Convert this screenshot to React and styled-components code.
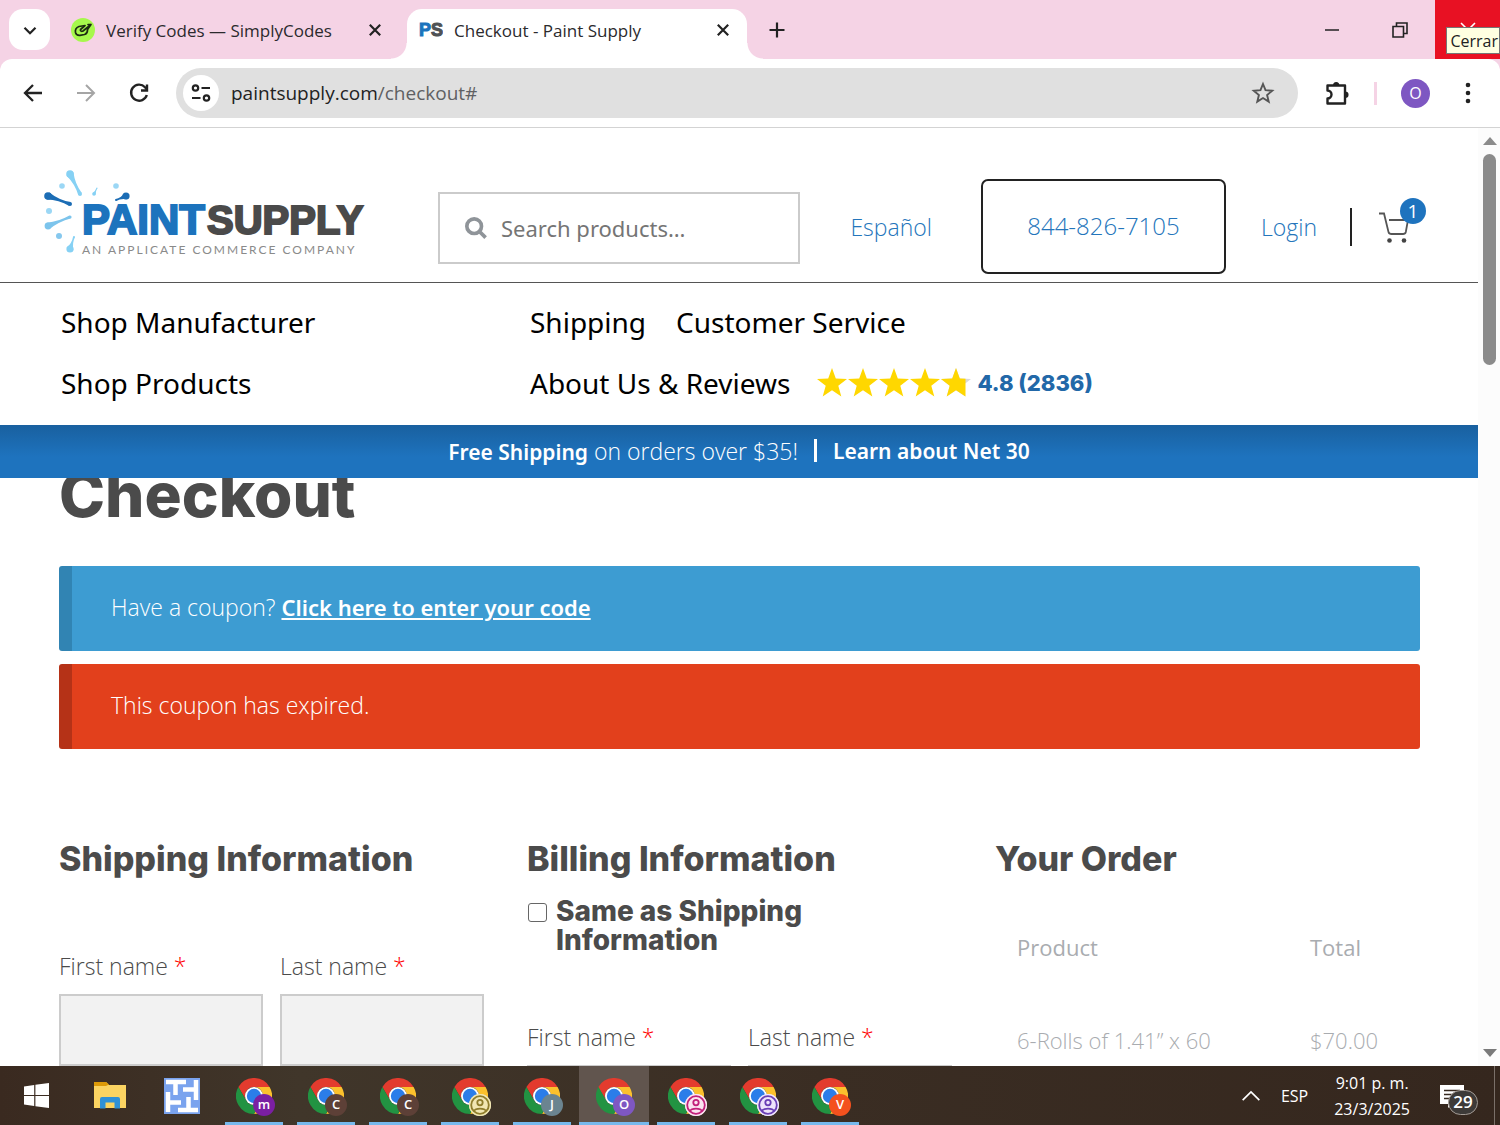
import React from "react";
import styled, { createGlobalStyle, css } from "styled-components";

const ui = '"Open Sans", "Noto Sans", sans-serif';
const body = '"Noto Sans", "Open Sans", sans-serif';
const light = '"Open Sans", "Noto Sans", sans-serif';
const display = 'Inter, "Liberation Sans", sans-serif';

const GlobalStyle = createGlobalStyle`
  *, *::before, *::after { box-sizing: border-box; }
  body { margin: 0; background: #fff; font-family: ${body}; }
  button, input { font: inherit; color: inherit; }
  button { border: 0; padding: 0; background: none; cursor: pointer; }
  a { color: inherit; text-decoration: none; }
  h1, h2, p { margin: 0; padding: 0; }
  svg { display: block; flex: none; }
`;

const Screen = styled.div`
  height: 100vh;
  display: flex;
  flex-direction: column;
  overflow: hidden;
`;

/* ---------- browser chrome ---------- */

const TabStrip = styled.div`
  flex: none;
  height: 59px;
  display: flex;
  align-items: flex-end;
  background: #f5d3e5;
  font-family: ${ui};
`;

const TabMenu = styled.button`
  width: 41px;
  height: 41px;
  margin: 0 9px 9px;
  border-radius: 14px;
  background: #fff;
  display: grid;
  place-items: center;
`;

const Tab = styled.div`
  position: relative;
  height: 50px;
  width: ${(p) => (p.$active ? 340 : 348)}px;
  padding: 0 ${(p) => (p.$active ? 12 : 20)}px 8px 12px;
  display: flex;
  align-items: center;
  gap: 11px;
  color: #2b2a2d;
  font-size: 17px;
  border-radius: 15px 15px 0 0;
  ${(p) =>
    p.$active &&
    css`
      background: #fff;
      &::before,
      &::after {
        content: "";
        position: absolute;
        bottom: 0;
        width: 16px;
        height: 16px;
      }
      &::before {
        right: 100%;
        background: radial-gradient(circle at 0 0, transparent 15px, #fff 16px);
      }
      &::after {
        left: 100%;
        background: radial-gradient(circle at 100% 0, transparent 15px, #fff 16px);
      }
    `}
`;

const TabTitle = styled.span`
  flex: 1;
  white-space: nowrap;
`;

const IconButton = styled.button`
  width: ${(p) => p.$w || 24}px;
  height: ${(p) => p.$h || 24}px;
  display: grid;
  place-items: center;
  flex: none;
`;

const NewTab = styled(IconButton)`
  margin: 0 18px 17px;
`;

const WindowButtons = styled.div`
  align-self: stretch;
  margin-left: auto;
  display: flex;
`;

const CloseWindow = styled(IconButton)`
  position: relative;
  background: #e81123;
`;

const Tooltip = styled.span`
  position: absolute;
  right: 0;
  top: 27px;
  height: 27px;
  padding: 0 1px 0 3px;
  border: 1px solid #767676;
  background: #ffffe1;
  color: #222;
  font-size: 16px;
  line-height: 26px;
`;

const ToolbarBackdrop = styled.div`
  flex: none;
  background: #f5d3e5;
`;

const Toolbar = styled.div`
  height: 69px;
  padding: 0 28px 0 21px;
  display: flex;
  align-items: center;
  border-bottom: 1px solid #d3d3d3;
  border-radius: 12px 12px 0 0;
  background: #fff;
  font-family: ${ui};
`;

const NavButtons = styled.div`
  display: flex;
  gap: 29px;
  margin-right: 25px;
`;

const AddressBar = styled.div`
  flex: 1;
  height: 50px;
  padding: 0 23px 0 7px;
  border-radius: 25px;
  background: #e0e0e0;
  display: flex;
  align-items: center;
  gap: 12px;
`;

const SiteInfo = styled.button`
  width: 36px;
  height: 36px;
  border-radius: 50%;
  background: #fff;
  display: grid;
  place-items: center;
`;

const Url = styled.span`
  flex: 1;
  font-size: 19px;
  color: #5f6063;
  b { font-weight: 400; color: #222; }
`;

const ToolbarEnd = styled.div`
  display: flex;
  align-items: center;
  margin-left: 27px;
`;

const ToolbarRule = styled.span`
  width: 3px;
  height: 23px;
  margin: 0 24px 0 25px;
  background: #f5d3e5;
`;

const Profile = styled.button`
  width: 29px;
  height: 29px;
  margin-right: 34px;
  border-radius: 50%;
  background: #7e57c2;
  color: #fff;
  font-size: 16px;
  line-height: 28px;
`;

/* ---------- page ---------- */

const Viewport = styled.div`
  flex: 1;
  min-height: 0;
  display: flex;
`;

const Page = styled.div`
  flex: 1;
  min-width: 0;
  overflow: hidden;
  color: #4b4b4b;
`;

const Scrollbar = styled.div`
  flex: none;
  width: 22px;
  padding: 9px 4px 9px 5px;
  background: #fcfcfc;
  display: flex;
  flex-direction: column;
  align-items: center;
  gap: 9px;
`;

const Thumb = styled.div`
  width: 13px;
  height: 211px;
  margin-bottom: auto;
  border-radius: 7px;
  background: #8b8b8b;
`;

const Header = styled.header`
  background: #fff;
`;

const HeaderTop = styled.div`
  padding: 42px 52px 8px 44px;
  display: flex;
  align-items: flex-end;
  border-bottom: 1px solid #555;
`;

const HeaderTools = styled.div`
  flex: 1;
  min-width: 0;
  height: 95px;
  margin-left: 72px;
  display: flex;
  align-items: center;
  color: #2475bb;
  font-family: ${light};
  font-weight: 300;
  font-size: 23px;
`;

const Search = styled.label`
  flex: 1;
  min-width: 0;
  height: 72px;
  margin: 3px 50px 0 0;
  padding: 0 25px;
  border: 2px solid #cbcbcb;
  display: flex;
  align-items: center;
  gap: 14px;
  color: #757575;
`;

const SearchInput = styled.input`
  flex: 1;
  min-width: 0;
  border: 0;
  outline: 0;
  padding: 0;
  background: none;
  font-family: ${body};
  font-size: 22px;
  font-weight: 400;
  &::placeholder { color: #757575; opacity: 1; }
`;

const Phone = styled.a`
  flex: none;
  width: 245px;
  height: 95px;
  margin: 0 35px 0 49px;
  padding-bottom: 2px;
  border: 2px solid #222;
  border-radius: 7px;
  display: grid;
  place-items: center;
  font-size: 24px;
`;

const HeaderRule = styled.span`
  width: 2px;
  height: 38px;
  margin: 0 26px 0 33px;
  background: #222;
`;

const Cart = styled.a`
  position: relative;
  flex: none;
  width: 48px;
  height: 36px;
`;

const CartCount = styled.span`
  position: absolute;
  right: 0;
  top: -11px;
  width: 26px;
  height: 26px;
  border-radius: 50%;
  background: #1e73be;
  color: #fff;
  font-size: 19px;
  font-weight: 400;
  line-height: 26px;
  text-align: center;
`;

const SiteNav = styled.nav`
  height: 142px;
  padding: 8px 59px 12px 61px;
  display: grid;
  grid-template-columns: 469px 1fr;
  grid-auto-rows: 61px;
  align-items: center;
  color: #000;
  font-size: 28px;
`;

const NavCell = styled.div`
  display: flex;
  align-items: center;
  gap: ${(p) => p.$gap || 30}px;
  white-space: nowrap;
`;

const Rating = styled.a`
  display: flex;
  align-items: center;
  gap: 6px;
  color: #2268a8;
  font-family: ${display};
  font-weight: 800;
  font-size: 22px;
`;

const Banner = styled.div`
  height: 53px;
  padding-bottom: 2px;
  display: flex;
  align-items: center;
  justify-content: center;
  gap: 16px;
  background: linear-gradient(#19609f, #1e73be 60%);
  color: #fff;
  font-family: ${light};
  font-size: 23px;
  font-weight: 300;
  white-space: nowrap;
  b, a { font-family: ${body}; font-weight: 600; font-size: 21px; }
`;

const BannerRule = styled.span`
  width: 3px;
  height: 23px;
  background: #fff;
`;

const Content = styled.main`
  padding: 0 58px 0 59px;
  overflow: hidden;
`;

const Title = styled.h1`
  margin: -18px 0 36px;
  font-family: ${display};
  font-weight: 800;
  font-size: 62px;
  line-height: 70px;
`;

const Notice = styled.p`
  height: 85px;
  margin-bottom: 13px;
  padding-left: 39px;
  border-left: 13px solid ${(p) => (p.$error ? "#b53217" : "#3184b3")};
  border-radius: 3px;
  background: ${(p) => (p.$error ? "#e2401c" : "#3d9cd2")};
  color: #fff;
  font-family: ${light};
  font-weight: 300;
  font-size: 23px;
  line-height: 82px;
  a {
    font-family: ${body};
    font-weight: 600;
    font-size: 22px;
    text-decoration: underline;
  }
`;

const Columns = styled.div`
  padding-top: 77px;
  display: grid;
  grid-template-columns: repeat(3, minmax(0, 1fr));
  gap: 43px;
`;

const SectionTitle = styled.h2`
  font-family: ${display};
  font-weight: 800;
  font-size: 34px;
  line-height: 40px;
  white-space: nowrap;
`;

const SameAs = styled.label`
  margin: 18px 0 66px;
  display: flex;
  gap: 9px;
  font-family: ${display};
  font-weight: 800;
  font-size: 28px;
  line-height: 29px;
`;

const Checkbox = styled.input`
  appearance: none;
  flex: none;
  width: 19px;
  height: 19px;
  margin: 6px 0 0 1px;
  border: 1px solid #666;
  border-radius: 3px;
  background: #fff;
`;

const SameAsText = styled.span`
  max-width: 280px;
`;

const Fields = styled.div`
  margin-top: ${(p) => p.$top || 0}px;
  display: grid;
  grid-template-columns: 1fr 1fr;
  gap: 17px;
`;

const Field = styled.label`
  min-width: 0;
  display: flex;
  flex-direction: column;
  gap: 12px;
  font-family: ${light};
  font-weight: 300;
  font-size: 23px;
  line-height: 32px;
`;

const Required = styled.abbr`
  color: #f00;
`;

const TextBox = styled.input`
  width: 100%;
  height: 72px;
  padding: 0 16px;
  border: 2px solid #ccc;
  border-radius: 0;
  background: #f2f2f2;
`;

const OrderTable = styled.table`
  width: 100%;
  margin-top: 51px;
  border-collapse: collapse;
  table-layout: fixed;
  text-align: left;
  color: #a9acb0;
  font-family: ${light};
  font-size: 22px;
  line-height: 34px;
  th, td {
    padding: 0 0 59px 22px;
    font-weight: 300;
    white-space: nowrap;
  }
  th { font-weight: 400; }
  th:last-child { width: 132px; }
`;

/* ---------- taskbar ---------- */

const Taskbar = styled.footer`
  flex: none;
  height: 59px;
  display: flex;
  gap: 2px;
  background: linear-gradient(90deg, #3a2a20, #40362a 20%, #3a2d23 55%, #35271e);
  color: #fff;
  font-family: ${ui};
  font-size: 16px;
`;

const TaskButton = styled.button`
  width: ${(p) => p.$w || 70}px;
  display: flex;
  flex-direction: column;
  align-items: center;
  justify-content: center;
  background-color: ${(p) => (p.$active ? "#61554e" : "transparent")};
  background-repeat: no-repeat;
  background-position: bottom;
  background-size: ${(p) => (p.$active ? "100%" : "58px")} 3px;
  ${(p) => p.$open && "background-image: linear-gradient(#76b9ed, #76b9ed);"}
`;

const ChromeWrap = styled.span`
  position: relative;
  display: block;
`;

const Badge = styled.span`
  position: absolute;
  left: 17px;
  top: 16px;
  width: 22px;
  height: 22px;
  border-radius: 50%;
  background: ${(p) => p.$color};
  color: #fff;
  font-size: 13px;
  font-weight: 600;
  line-height: 21px;
  text-align: center;
`;

const Tray = styled.div`
  margin-left: auto;
  padding-right: 5px;
  display: flex;
  align-items: center;
`;

const Language = styled.span`
  margin: 0 26px 0 20px;
`;

const Clock = styled.time`
  margin-right: 30px;
  text-align: center;
  line-height: 26px;
`;

const Notifications = styled.button`
  position: relative;
  width: 38px;
  height: 36px;
  margin: 3px 16px 0 0;
`;

const NotificationCount = styled.span`
  position: absolute;
  right: 0;
  bottom: 0;
  width: 30px;
  height: 25px;
  border: 1px solid #a39b95;
  border-radius: 13px;
  background: #3d3a38;
  font-size: 17px;
  font-weight: 600;
  line-height: 22px;
`;

const TrayEdge = styled.span`
  width: 1px;
  height: 100%;
  background: #7a7069;
`;

/* ---------- drawings ---------- */

const Stroke = ({ size = 24, color = "#222", w = 2, children, ...rest }) => (
  <svg width={size} height={size} viewBox="0 0 24 24" fill="none" stroke={color} strokeWidth={w} {...rest}>
    {children}
  </svg>
);

const Cross = () => (
  <Stroke w={2.2}>
    <path d="M6.8 6.8 17.2 17.2M17.2 6.8 6.8 17.2" />
  </Stroke>
);

const ChromeIcon = () => (
  <svg width="36" height="36" viewBox="0 0 48 48">
    <path fill="#e33b2e" d="M24 12H44.8A24 24 0 0 0 3.2 12L13.6 30A12 12 0 0 1 24 12Z" />
    <path fill="#fcc12d" d="M34.4 30 24 48A24 24 0 0 0 44.8 12H24A12 12 0 0 1 34.4 30Z" />
    <path fill="#229342" d="M13.6 30 3.2 12A24 24 0 0 0 24 48L34.4 30A12 12 0 0 1 13.6 30Z" />
    <circle cx="24" cy="24" r="12" fill="#fff" />
    <circle cx="24" cy="24" r="9.6" fill="#2b7de9" />
  </svg>
);

const PersonBadge = ({ color, fill }) => (
  <svg width="22" height="22" viewBox="0 0 22 22" fill="none" stroke={color} strokeWidth="1.8">
    <circle cx="11" cy="11" r="11" fill={fill} stroke="none" />
    <circle cx="11" cy="11" r="8.8" />
    <circle cx="11" cy="8.6" r="2.7" />
    <path d="M5 17c1.500-3.200 10.500-3.200 12 0" />
  </svg>
);

const starPath = "M15 0 18.800 10.400 30 11 21.300 17.800 24.300 28.500 15 22.300 5.700 28.500 8.700 17.800 0 11 11.200 10.400Z";

const Stars = () => (
  <svg width="154" height="29" viewBox="0 0 154 29">
    {[0, 31, 62, 93].map((x) => (
      <path key={x} d={starPath} transform={`translate(${x} 0)`} fill="#ffd700" />
    ))}
    <g transform="translate(124 0)">
      <path d={starPath} fill="#d9d9d9" />
      <path d="M15 0 18.800 10.400 24.500 10.700V28.500L15 22.300 5.700 28.500 8.700 17.800 0 11 11.200 10.400Z" fill="#ffd700" />
    </g>
  </svg>
);

const drop = (x1, y1, r1, x2, y2, r2, color) => {
  const a = Math.atan2(y2 - y1, x2 - x1) + Math.PI / 2;
  const c = Math.cos(a);
  const s = Math.sin(a);
  const mx = (x1 + x2) / 2;
  const my = (y1 + y2) / 2;
  return (
    <g fill={color}>
      <circle cx={x1} cy={y1} r={r1} />
      <circle cx={x2} cy={y2} r={r2} />
      <path
        d={`M${x1 + c * r1} ${y1 + s * r1}Q${mx} ${my} ${x2 + c * r2} ${y2 + s * r2}L${x2 - c * r2} ${y2 - s * r2}Q${mx} ${my} ${x1 - c * r1} ${y1 - s * r1}Z`}
      />
    </g>
  );
};

const Logo = () => (
  <svg width="322" height="104" viewBox="0 0 322 104" role="img" aria-label="Paint Supply">
    {drop(26, 4, 3.8, 36, 24, 2, "#86d1f4")}
    {drop(4, 26, 3.8, 26, 34, 2, "#1c6db5")}
    {drop(4, 56, 3.4, 26, 47, 1.6, "#7cc4ec")}
    {drop(26, 79, 3.6, 30, 67, 1, "#86d1f4")}
    {drop(82, 26, 3.6, 72, 30, 1, "#1c6db5")}
    {drop(50, 24, 1.8, 53, 18, 0.5, "#86d1f4")}
    <circle cx="18" cy="16" r="2.800" fill="#9bd7f5" />
    <circle cx="72" cy="16" r="2.800" fill="#9bd7f5" />
    <circle cx="5" cy="41" r="3" fill="#9bd7f5" />
    <circle cx="15" cy="66" r="3" fill="#86c8ee" />
    <g fontFamily="Liberation Sans, Arial, sans-serif" fontWeight="700" fontSize="40" strokeWidth="2">
      <text x="38" y="64" fontSize="42" fill="#1c73bd" stroke="#1c73bd">PAINT</text>
      <text x="163" y="64" fill="#4a4a4a" stroke="#4a4a4a">SUPPLY</text>
    </g>
    <text x="38" y="84" fontFamily="Lato, sans-serif" fontSize="12" fill="#8a8a8a" letterSpacing="2">
      AN APPLICATE COMMERCE COMPANY
    </text>
  </svg>
);

const PsIcon = () => (
  <svg width="24" height="24" viewBox="0 0 24 24">
    <text x="0" y="18" fontFamily="Liberation Sans, Arial, sans-serif" fontWeight="700" fontSize="18" strokeWidth="1">
      <tspan fill="#1c73bd" stroke="#1c73bd">P</tspan>
      <tspan fill="#4f5255" stroke="#4f5255">S</tspan>
    </text>
  </svg>
);

const MazeIcon = () => (
  <svg width="36" height="36" viewBox="0 0 36 36">
    <path d="M0 0H36V36H0Z" fill="#7aa3ee" />
    {[0, 90, 180, 270].map((turn) => (
      <path
        key={turn}
        d="M2 4H22M11.500 4V17"
        transform={`rotate(${turn} 18 18)`}
        stroke="#fff"
        strokeWidth="4.500"
        fill="none"
      />
    ))}
  </svg>
);

const profiles = [
  { letter: "m", color: "#7b1fa2" },
  { letter: "C", color: "#5d4037" },
  { letter: "C", color: "#5d4037" },
  { person: "#8f7d2c", color: "#f1e6b2" },
  { letter: "J", color: "#6b8490" },
  { letter: "O", color: "#7e57c2", active: true },
  { person: "#c2207a", color: "#fbe3f0" },
  { person: "#6a3fb5", color: "#eee3fb" },
  { letter: "V", color: "#f4511e" },
];

const NameFields = ({ section, top }) => (
  <Fields $top={top}>
    {["First name", "Last name"].map((label) => (
      <Field key={label}>
        <span>
          {label} <Required>*</Required>
        </span>
        <TextBox type="text" name={`${section}-${label}`} />
      </Field>
    ))}
  </Fields>
);

export default function App() {
  return (
    <Screen>
      <GlobalStyle />
      <TabStrip>
        <TabMenu aria-label="Tabs">
          <Stroke size={22} w={2.4}>
            <path d="m6 9.500 6 6 6-6" />
          </Stroke>
        </TabMenu>
        <Tab>
          <svg width="24" height="24" viewBox="0 0 24 24">
            <circle cx="12" cy="12" r="12" fill="#a6f84c" />
            <g fill="none" stroke="#1c2a12" strokeWidth="1.700" strokeLinecap="round" strokeLinejoin="round">
              <path d="M14 7.500 8 8.500C5.500 9.500 4 12 4.500 14.500c.5 2 2 3 4.500 2.800l4.500-.8c2-.5 3-2.500 3-4.500" />
              <path d="M13.500 8 9.500 11.500c-.5 1.500 1 2.300 2.500 1.500L20 6.500l-3.500 5M17 6.500h2.500" />
            </g>
          </svg>
          <TabTitle>Verify Codes — SimplyCodes</TabTitle>
          <IconButton aria-label="Close tab"><Cross /></IconButton>
        </Tab>
        <Tab $active>
          <PsIcon />
          <TabTitle>Checkout - Paint Supply</TabTitle>
          <IconButton aria-label="Close tab"><Cross /></IconButton>
        </Tab>
        <NewTab aria-label="New tab">
          <Stroke w={2.2}>
            <path d="M12 4.500v15M4.500 12h15" />
          </Stroke>
        </NewTab>
        <WindowButtons>
          <IconButton $w={66} $h={59} aria-label="Minimize">
            <Stroke w={1.5}><path d="M5 12h14" /></Stroke>
          </IconButton>
          <IconButton $w={70} $h={59} aria-label="Restore">
            <Stroke w={1.6}><path d="M5 8.500h10.500V19H5ZM8.500 8.500V5H19v10.500h-3.500" /></Stroke>
          </IconButton>
          <CloseWindow $w={65} $h={59} aria-label="Close window">
            <Stroke w={1.6} color="#fff"><path d="m5 5 14 14M19 5 5 19" /></Stroke>
            <Tooltip>Cerrar</Tooltip>
          </CloseWindow>
        </WindowButtons>
      </TabStrip>

      <ToolbarBackdrop>
        <Toolbar>
          <NavButtons>
            <IconButton aria-label="Back">
              <Stroke w={2.3}><path d="M21 12H4.500M12 4 4 12l8 8" /></Stroke>
            </IconButton>
            <IconButton aria-label="Forward">
              <Stroke w={2} color="#a5a5a5"><path d="M3 12h16.500M12 4l8 8-8 8" /></Stroke>
            </IconButton>
            <IconButton aria-label="Reload">
              <Stroke w={2.4}>
                <path d="M19.800 14A8 8 0 1 1 18 6.200L20 8.500" />
                <path d="M20 3.500v6h-6" />
              </Stroke>
            </IconButton>
          </NavButtons>
          <AddressBar>
            <SiteInfo aria-label="Site information">
              <Stroke w={2.2}>
                <circle cx="6.500" cy="7" r="2.700" />
                <path d="M12.500 7H21M3 17h8.500" />
                <circle cx="17.500" cy="17" r="2.700" />
              </Stroke>
            </SiteInfo>
            <Url><b>paintsupply.com</b>/checkout#</Url>
            <IconButton aria-label="Bookmark">
              <Stroke w={1.9} color="#555">
                <path d="m12 3 2.500 6.200 6.700.5-5.100 4.300 1.600 6.600L12 17l-5.700 3.600L7.900 14 2.800 9.700l6.700-.5Z" />
              </Stroke>
            </IconButton>
          </AddressBar>
          <ToolbarEnd>
            <IconButton aria-label="Extensions">
              <svg width="24" height="26" viewBox="0 0 24 26">
                <path
                  d="M2.500 4.500H20V22.500H2.500V17.500a4 4 0 0 0 0-8Z"
                  fill="none"
                  stroke="#222"
                  strokeWidth="2.400"
                  strokeLinejoin="round"
                />
                <path d="M8 4.500a3.200 3.500 0 0 1 6.400 0ZM20 10.500a3.500 3.200 0 0 1 0 6.500Z" fill="#222" />
              </svg>
            </IconButton>
            <ToolbarRule />
            <Profile aria-label="Profile">O</Profile>
            <IconButton $w={8} aria-label="Menu">
              <svg width="6" height="24" viewBox="0 0 6 24" fill="#222">
                <circle cx="3" cy="4" r="2.300" />
                <circle cx="3" cy="12" r="2.300" />
                <circle cx="3" cy="20" r="2.300" />
              </svg>
            </IconButton>
          </ToolbarEnd>
        </Toolbar>
      </ToolbarBackdrop>

      <Viewport>
        <Page>
          <Header>
            <HeaderTop>
              <a href="#home"><Logo /></a>
              <HeaderTools>
                <Search>
                  <Stroke size={22} w={4} color="#8f9499">
                    <circle cx="10" cy="10" r="8" />
                    <path d="m15.500 15.500 7 7" />
                  </Stroke>
                  <SearchInput type="search" aria-label="Search products" placeholder="Search products…" />
                </Search>
                <a href="#es">Español</a>
                <Phone href="tel:8448267105">844-826-7105</Phone>
                <a href="#login">Login</a>
                <HeaderRule />
                <Cart href="#cart" aria-label="Cart">
                  <svg width="32" height="36" viewBox="0 0 32 36" fill="none" stroke="#555" strokeWidth="1.800">
                    <path d="M1 4.500h5l4.500 18.500q.5 2 3 2h11.500q2.300 0 2.800-2L30 11H11" />
                    <circle cx="11.500" cy="31.500" r="2.300" fill="#444" stroke="none" />
                    <circle cx="26" cy="31.500" r="2.300" fill="#444" stroke="none" />
                  </svg>
                  <CartCount>1</CartCount>
                </Cart>
              </HeaderTools>
            </HeaderTop>
            <SiteNav>
              <NavCell><a href="#manufacturer">Shop Manufacturer</a></NavCell>
              <NavCell>
                <a href="#shipping">Shipping</a>
                <a href="#service">Customer Service</a>
              </NavCell>
              <NavCell><a href="#products">Shop Products</a></NavCell>
              <NavCell $gap={27}>
                <a href="#about">About Us &amp; Reviews</a>
                <Rating href="#reviews"><Stars />4.8 (2836)</Rating>
              </NavCell>
            </SiteNav>
          </Header>
          <Banner>
            <span><b>Free Shipping</b> on orders over $35!</span>
            <BannerRule />
            <a href="#net30">Learn about Net 30</a>
          </Banner>
          <Content>
            <Title>Checkout</Title>
            <Notice>Have a coupon? <a href="#coupon">Click here to enter your code</a></Notice>
            <Notice $error>This coupon has expired.</Notice>
            <Columns>
              <section>
                <SectionTitle>Shipping Information</SectionTitle>
                <NameFields section="shipping" top={71} />
              </section>
              <section>
                <SectionTitle>Billing Information</SectionTitle>
                <SameAs>
                  <Checkbox type="checkbox" />
                  <SameAsText>Same as Shipping Information</SameAsText>
                </SameAs>
                <NameFields section="billing" />
              </section>
              <section>
                <SectionTitle>Your Order</SectionTitle>
                <OrderTable>
                  <thead>
                    <tr><th>Product</th><th>Total</th></tr>
                  </thead>
                  <tbody>
                    <tr><td>6-Rolls of 1.41” x 60</td><td>$70.00</td></tr>
                  </tbody>
                </OrderTable>
              </section>
            </Columns>
          </Content>
        </Page>
        <Scrollbar>
          <svg width="14" height="8" viewBox="0 0 14 8"><path d="M7 0 14 8H0Z" fill="#8b8b8b" /></svg>
          <Thumb />
          <svg width="14" height="8" viewBox="0 0 14 8"><path d="M0 0H14L7 8Z" fill="#7a7a7a" /></svg>
        </Scrollbar>
      </Viewport>

      <Taskbar>
        <TaskButton $w={73} aria-label="Start">
          <svg width="25" height="25" viewBox="0 0 25 25" fill="#fff">
            <path d="M0 3.500 10.200 2V12H0ZM11.400 1.800 25 0V12H11.400ZM0 13H10.200V23L0 21.500ZM11.400 13H25V25L11.400 23.200Z" />
          </svg>
        </TaskButton>
        <TaskButton aria-label="File Explorer">
          <svg width="32" height="27" viewBox="0 0 32 27">
            <path d="M0 0H12l3 3H32V26H0Z" fill="#fbd462" />
            <path d="M0 0H12l3 2.500L12 4H0Z" fill="#dd9a08" />
            <path d="M6 26.500V17q0-2 2-2H24q2 0 2 2v9.500H20.500V20.500H11.500v6Z" fill="#3091d6" />
          </svg>
        </TaskButton>
        <TaskButton aria-label="Maze">
          <MazeIcon />
        </TaskButton>
        {profiles.map((p, i) => (
          <TaskButton key={i} $open $active={p.active} aria-label="Chrome">
            <ChromeWrap>
              <ChromeIcon />
              <Badge $color={p.color}>
                {p.person ? <PersonBadge color={p.person} fill={p.color} /> : p.letter}
              </Badge>
            </ChromeWrap>
          </TaskButton>
        ))}
        <Tray>
          <Stroke size={20} w={2} color="#fff"><path d="m2 17 10-10 10 10" /></Stroke>
          <Language>ESP</Language>
          <Clock>9:01 p. m.<br />23/3/2025</Clock>
          <Notifications aria-label="Notifications">
            <svg width="24" height="24" viewBox="0 0 24 24">
              <path d="M0 0H24V19H12L8 23V19H0Z" fill="#fff" />
              <path d="M4 5.500H20M4 9.500H20M4 13.500H14" stroke="#382a20" strokeWidth="1.600" />
            </svg>
            <NotificationCount>29</NotificationCount>
          </Notifications>
          <TrayEdge />
        </Tray>
      </Taskbar>
    </Screen>
  );
}
